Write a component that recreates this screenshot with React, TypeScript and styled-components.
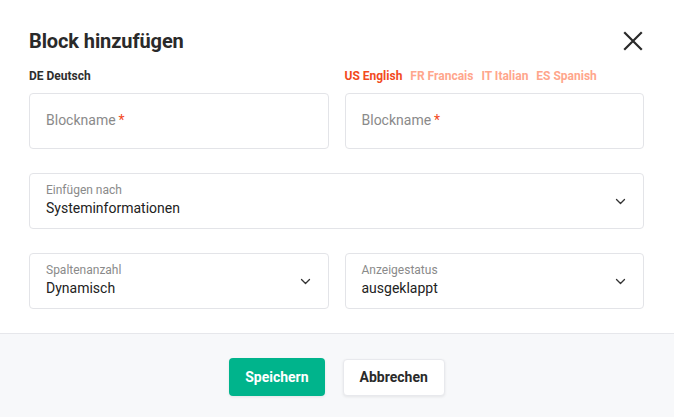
import React from "react";
import styled, { createGlobalStyle } from "styled-components";

const Global = createGlobalStyle`
  html, body { margin: 0; padding: 0; background: #ffffff; }
  body { font-family: Roboto, "Noto Sans", sans-serif; color: #222; }
  * { box-sizing: border-box; }
`;

const Modal = styled.div`
  width: 674px;
  height: 417px;
  display: flex;
  flex-direction: column;
  background: #fff;
`;

const Body = styled.div`
  padding: 28px 30px 24px 29px;
  display: flex;
  flex-direction: column;
`;

const Header = styled.div`
  display: flex;
  align-items: center;
  justify-content: space-between;
  height: 26px;
`;

const Title = styled.h1`
  margin: 0;
  font-size: 20px;
  font-weight: 700;
  color: #2a2a2a;
  letter-spacing: -0.1px;
`;

const CloseButton = styled.button`
  border: 0;
  background: none;
  padding: 0;
  width: 24px;
  height: 24px;
  display: flex;
  align-items: center;
  justify-content: center;
  margin-right: -1px;
  cursor: pointer;
`;

const Grid = styled.div<{ $mt?: number }>`
  display: grid;
  grid-template-columns: 1fr 1fr;
  column-gap: 16px;
  margin-top: ${(p) => p.$mt ?? 24}px;
`;

const Column = styled.div`
  display: flex;
  flex-direction: column;
  gap: 9px;
`;

const LangRow = styled.div`
  display: flex;
  gap: 8px;
  height: 16px;
  align-items: center;
`;

const Lang = styled.span<{ $tone: "dark" | "active" | "muted" }>`
  font-size: 12px;
  font-weight: 700;
  line-height: 16px;
  color: ${(p) =>
    p.$tone === "dark" ? "#2e2e2e" : p.$tone === "active" ? "#f24a1d" : "#ffa68c"};
`;

const Field = styled.div<{ $wide?: boolean }>`
  height: 56px;
  border: 1px solid #e3e4e8;
  border-radius: 4px;
  background: #fff;
  display: flex;
  align-items: center;
  padding: 0 17px 3px 16px;
  margin-top: ${(p) => (p.$wide ? "24px" : "0")};
`;

const Placeholder = styled.span`
  font-size: 14px;
  color: #8a8a8a;
`;

const Required = styled.span`
  color: #f24a1d;
  margin-left: 3px;
`;

const SelectText = styled.div`
  flex: 1;
  display: flex;
  flex-direction: column;
  gap: 2px;
`;

const SmallLabel = styled.span`
  font-size: 12px;
  color: #8a8a8a;
  line-height: 14px;
`;

const Value = styled.span`
  font-size: 14px;
  color: #222;
  line-height: 18px;
`;

const ChevronBox = styled.span`
  display: flex;
  margin-top: 3px;
`;

const Footer = styled.div`
  flex: 1;
  background: #f7f8fa;
  border-top: 1px solid #e6e7eb;
  display: flex;
  justify-content: center;
  align-items: center;
  gap: 18px;
  padding-top: 3px;
`;

const Button = styled.button<{ $primary?: boolean }>`
  height: ${(p) => (p.$primary ? 38 : 37)}px;
  padding: 0 16px;
  border-radius: 4px;
  font-family: Roboto, sans-serif;
  font-size: 14px;
  font-weight: 700;
  cursor: pointer;
  border: ${(p) => (p.$primary ? "0" : "1px solid #e8e9ed")};
  background: ${(p) => (p.$primary ? "#00b48c" : "#fff")};
  color: ${(p) => (p.$primary ? "#fff" : "#2a2a2a")};
  box-shadow: 0 1px 3px rgba(0, 0, 0, 0.08);
`;

const Chevron = () => (
  <ChevronBox>
    <svg width="11" height="7" viewBox="0 0 11 7" fill="none">
      <polyline points="1.5,1.5 5.5,5.5 9.5,1.5" stroke="#333" strokeWidth="1.3" strokeLinecap="round" strokeLinejoin="round" />
    </svg>
  </ChevronBox>
);

const Select = ({ label, value, wide }: { label: string; value: string; wide?: boolean }) => (
  <Field $wide={wide}>
    <SelectText>
      <SmallLabel>{label}</SmallLabel>
      <Value>{value}</Value>
    </SelectText>
    <Chevron />
  </Field>
);

export default function App() {
  return (
    <Modal>
      <Global />
      <Body>
        <Header>
          <Title>Block hinzufügen</Title>
          <CloseButton aria-label="close">
            <svg width="20" height="20" viewBox="0 0 20 20">
              <path d="M2 2 L18 18 M18 2 L2 18" stroke="#2a2a2a" strokeWidth="2.2" strokeLinecap="square" />
            </svg>
          </CloseButton>
        </Header>
        <Grid $mt={14}>
          <Column>
            <LangRow>
              <Lang $tone="dark">DE Deutsch</Lang>
            </LangRow>
            <Field>
              <Placeholder>
                Blockname<Required>*</Required>
              </Placeholder>
            </Field>
          </Column>
          <Column>
            <LangRow>
              <Lang $tone="active">US English</Lang>
              <Lang $tone="muted">FR Francais</Lang>
              <Lang $tone="muted">IT Italian</Lang>
              <Lang $tone="muted">ES Spanish</Lang>
            </LangRow>
            <Field>
              <Placeholder>
                Blockname<Required>*</Required>
              </Placeholder>
            </Field>
          </Column>
        </Grid>
        <Select wide label="Einfügen nach" value="Systeminformationen" />
        <Grid>
          <Select label="Spaltenanzahl" value="Dynamisch" />
          <Select label="Anzeigestatus" value="ausgeklappt" />
        </Grid>
      </Body>
      <Footer>
        <Button $primary>Speichern</Button>
        <Button>Abbrechen</Button>
      </Footer>
    </Modal>
  );
}
